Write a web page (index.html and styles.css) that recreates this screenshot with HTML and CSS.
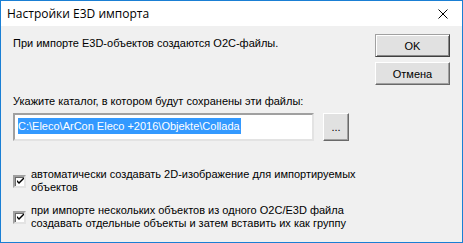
FILE: index.html
```
<!DOCTYPE html>
<html lang="ru">
<head>
  <meta charset="UTF-8">
  <link rel="stylesheet" href="styles.css">
  <title>Настройки E3D импорта</title>
</head>
<body>

<div class="window">
  <div class="titlebar">
    <span class="title">Настройки E3D импорта</span>
    <svg class="close" width="10" height="10" viewBox="0 0 10 10">
      <path d="M0.5 0.5 L9.5 9.5 M9.5 0.5 L0.5 9.5" stroke="#000" stroke-width="1"/>
    </svg>
  </div>

  <div class="content">
    <div class="top">
      <div class="main">
        <p class="intro">При импорте E3D-объектов создаются O2C-файлы.</p>
        <p class="label">Укажите каталог, в котором будут сохранены эти файлы:</p>
        <div class="path-row">
          <div class="field"><span class="selected">C:\Eleco\ArCon Eleco +2016\Objekte\Collada</span></div>
          <button class="btn browse">...</button>
        </div>
      </div>
      <div class="buttons">
        <button class="btn default">OK</button>
        <button class="btn">Отмена</button>
      </div>
    </div>

    <label class="option first">
      <span class="check"><svg width="7" height="7" viewBox="0 0 7 7"><path d="M0 2 L0 4 L2 6 L7 1 L7 -1 L2 4 Z" fill="#000"/></svg></span>
      <span>автоматически создавать 2D-изображение для импортируемых<br>объектов</span>
    </label>
    <label class="option">
      <span class="check"><svg width="7" height="7" viewBox="0 0 7 7"><path d="M0 2 L0 4 L2 6 L7 1 L7 -1 L2 4 Z" fill="#000"/></svg></span>
      <span>при импорте нескольких объектов из одного O2C/E3D файла<br>создавать отдельные объекты и затем вставить их как группу</span>
    </label>
  </div>
</div>

</body>
</html>
```

FILE: styles.css
```
body {
  margin: 0;
  font-family: 'Liberation Sans', Arial, sans-serif;
  font-size: 11px;
  color: #000;
}

.window {
  width: 463px;
  height: 243px;
  box-sizing: border-box;
  border: 1px solid #1a7fd4;
  display: flex;
  flex-direction: column;
  background-color: #f0f0f0;
}

.titlebar {
  height: 25px;
  background-color: #fff;
  display: flex;
  align-items: center;
  justify-content: space-between;
  padding: 0 14px 0 6px;
}

.title {
  font-family: 'Open Sans', 'Liberation Sans', sans-serif;
  font-size: 12px;
  margin-top: -1px;
}

.content {
  padding: 8px 12px 0 12px;
}

.top {
  display: flex;
  justify-content: space-between;
}

.main {
  width: 338px;
}

p {
  margin: 0;
  line-height: 13px;
}

.intro {
  margin-top: 3px;
}

.label {
  margin-top: 45px;
}

.path-row {
  display: flex;
  margin-top: 5px;
  gap: 9px;
}

.field {
  width: 301px;
  height: 28px;
  box-sizing: border-box;
  background-color: #fff;
  border: 2px solid;
  border-color: #a0a0a0 #e3e3e3 #e3e3e3 #a0a0a0;
  padding: 3px 0 0 3px;
  line-height: 16px;
  white-space: nowrap;
  overflow: hidden;
}

.selected {
  background-color: #3399ff;
  color: #fff;
  display: inline-block;
  padding-right: 1px;
}

.buttons {
  display: flex;
  flex-direction: column;
  gap: 5px;
  width: 75px;
}

.btn {
  font-family: 'Liberation Sans', Arial, sans-serif;
  font-size: 11px;
  height: 23px;
  background-color: #e1e1e1;
  border: 1px solid;
  border-color: #fff #696969 #696969 #fff;
  box-shadow: inset -1px -1px 0 #a0a0a0;
  padding: 0;
  color: #000;
}

.btn.default {
  border-color: #a0a0a0 #404040 #404040 #a0a0a0;
  box-shadow: inset 1px 1px 0 #fff, inset -1px -1px 0 #888;
}

.browse {
  width: 26px;
  height: 28px;
}

.option {
  display: flex;
  align-items: center;
  gap: 5px;
  line-height: 13px;
}

.option.first {
  margin-top: 27px;
}

.option + .option {
  margin-top: 10px;
}

.check {
  width: 13px;
  height: 13px;
  box-sizing: border-box;
  flex: none;
  background-color: #fff;
  border: 2px solid;
  border-color: #a0a0a0 #e3e3e3 #e3e3e3 #a0a0a0;
  box-shadow: inset 1px 1px 0 #696969;
  display: flex;
  align-items: center;
  justify-content: center;
}

.check svg {
  margin: 1px 0 0 1px;
}
```
